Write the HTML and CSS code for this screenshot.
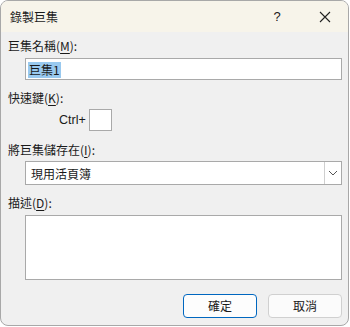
FILE: index.html
```html
<!DOCTYPE html>
<html lang="zh-Hant">
<head>
    <meta charset="UTF-8">
    <title>錄製巨集</title>
    <link rel="stylesheet" href="styles.css">
</head>
<body>
    <div class="dialog">
        <div class="titlebar">
            <span class="title">錄製巨集</span>
            <span class="help">?</span>
            <span class="close">
                <svg width="12" height="12" viewBox="0 0 12 12"><path d="M1 1 L11 11 M11 1 L1 11" stroke="#222" stroke-width="1.1" fill="none"/></svg>
            </span>
        </div>

        <div class="content">
            <div class="label first">巨集名稱(<u>M</u>):</div>
            <div class="field name"><span class="sel">巨集1</span></div>

            <div class="label gap">快速鍵(<u>K</u>):</div>
            <div class="shortcut">
                <span>Ctrl+</span>
                <div class="keybox"></div>
            </div>

            <div class="label gap2">將巨集儲存在(<u>I</u>):</div>
            <div class="field combo">
                <span class="combo-text">現用活頁簿</span>
                <span class="combo-btn">
                    <svg width="10" height="6" viewBox="0 0 10 6"><path d="M1 1 L5 5 L9 1" stroke="#555" stroke-width="1" fill="none"/></svg>
                </span>
            </div>

            <div class="label gap">描述(<u>D</u>):</div>
            <div class="field desc"></div>

            <div class="buttons">
                <div class="btn ok">確定</div>
                <div class="btn">取消</div>
            </div>
        </div>
    </div>
</body>
</html>
```

FILE: styles.css
```css
body {
    margin: 0;
    background: #ffffff;
    font-family: "Noto Sans CJK TC", "Liberation Sans", sans-serif;
    font-size: 12px;
    color: #1a1a1a;
}
.dialog {
    box-sizing: border-box;
    width: 349px;
    height: 326px;
    border: 1px solid #a8a8a8;
    border-radius: 8px;
    background: #f0f0f0;
    overflow: hidden;
}
.titlebar {
    height: 31px;
    background: #f7f4ea;
    display: flex;
    align-items: center;
    padding-left: 9px;
}
.title {
    flex: 1;
    font-size: 12px;
}
.help {
    width: 46px;
    text-align: center;
    font-family: "Liberation Sans", sans-serif;
    font-size: 13px;
    margin-right: 2px;
}
.close {
    width: 46px;
    display: flex;
    justify-content: center;
}
.content {
    padding: 0 6px 0 7px;
}
.label {
    height: 16px;
    line-height: 16px;
}
.label u {
    text-underline-offset: 2px;
}
.first {
    margin-top: 6px;
}
.gap {
    margin-top: 10px;
}
.gap2 {
    margin-top: 11px;
}
.field {
    box-sizing: border-box;
    margin-left: 17px;
    background: #ffffff;
    border: 1px solid #a9a9a9;
}
.name {
    margin-top: 4px;
    height: 22px;
    padding: 2px 0 0 2px;
}
.sel {
    display: inline-block;
    background: #99c9ef;
    line-height: 16px;
    padding: 0 1px;
}
.shortcut {
    display: flex;
    align-items: center;
    margin-top: 3px;
    padding-left: 51px;
}
.shortcut span {
    font-family: "Liberation Sans", sans-serif;
    font-size: 12.5px;
    margin-right: 3px;
}
.keybox {
    box-sizing: border-box;
    width: 23px;
    height: 22px;
    background: #ffffff;
    border: 1px solid #a9a9a9;
}
.combo {
    margin-top: 3px;
    height: 24px;
    display: flex;
    align-items: center;
}
.combo-text {
    flex: 1;
    padding-left: 5px;
}
.combo-btn {
    box-sizing: border-box;
    width: 17px;
    height: 22px;
    border-left: 1px solid #cfcfcf;
    display: flex;
    align-items: center;
    justify-content: center;
}
.desc {
    margin-top: 4px;
    height: 65px;
}
.buttons {
    display: flex;
    justify-content: flex-end;
    gap: 11px;
    margin-top: 14px;
}
.btn {
    box-sizing: border-box;
    width: 74px;
    height: 24px;
    line-height: 22px;
    text-align: center;
    background: #fbfbfb;
    border: 1px solid #d0d0d0;
    border-radius: 4px;
}
.ok {
    border-color: #0067c0;
    background: #fdfdfd;
}
```
